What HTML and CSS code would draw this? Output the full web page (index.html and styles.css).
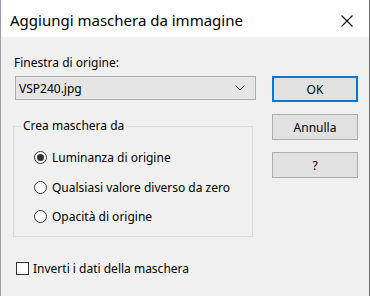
FILE: index.html
```html
<!DOCTYPE html>
<html lang="it">
<head>
  <meta charset="UTF-8">
  <title>Aggiungi maschera da immagine</title>
  <link rel="stylesheet" href="styles.css">
</head>
<body>
  <div class="finestra">
    <!-- Barra del titolo -->
    <div class="titolo">
      <span class="titolo-testo">Aggiungi maschera da immagine</span>
      <span class="chiudi">
        <svg width="12" height="12" viewBox="0 0 12 12">
          <path d="M0.5 0.5 L11.5 11.5 M11.5 0.5 L0.5 11.5" stroke="#111" stroke-width="1.1" fill="none"/>
        </svg>
      </span>
    </div>

    <div class="contenuto">
      <!-- Colonna sinistra -->
      <div class="colonna">
        <div class="etichetta">Finestra di origine:</div>
        <div class="tendina">
          <span>VSP240.jpg</span>
          <svg width="10" height="6" viewBox="0 0 10 6">
            <path d="M0.5 0.5 L5 5 L9.5 0.5" stroke="#444" stroke-width="1" fill="none"/>
          </svg>
        </div>

        <fieldset class="gruppo">
          <legend>Crea maschera da</legend>
          <div class="opzione"><span class="radio attivo"></span>Luminanza di origine</div>
          <div class="opzione"><span class="radio"></span>Qualsiasi valore diverso da zero</div>
          <div class="opzione"><span class="radio"></span>Opacità di origine</div>
        </fieldset>

        <div class="spunta"><span class="casella"></span>Inverti i dati della maschera</div>
      </div>

      <!-- Colonna pulsanti -->
      <div class="pulsanti">
        <button class="pulsante predefinito">OK</button>
        <button class="pulsante">Annulla</button>
        <button class="pulsante">?</button>
      </div>
    </div>
  </div>
</body>
</html>
```

FILE: styles.css
```css
html, body {
  margin: 0;
  padding: 0;
}

body {
  font-family: 'Noto Sans', 'Open Sans', sans-serif;
  font-size: 12px;
  color: #000;
}

.finestra {
  width: 370px;
  height: 296px;
  box-sizing: border-box;
  background: #f0f0f0;
  border-left: 1px solid #a39aa8;
  border-right: 1px solid #6e6e6e;
  display: flex;
  flex-direction: column;
}

.titolo {
  height: 37px;
  background: #fff;
  display: flex;
  align-items: center;
  justify-content: space-between;
  padding: 0 16px 0 9px;
}

.titolo-testo {
  font-size: 15px;
  margin-top: 2px;
}

.chiudi {
  display: flex;
  margin-top: 5px;
}

.contenuto {
  display: flex;
  padding: 18px 0 0 12px;
}

.colonna {
  width: 243px;
  display: flex;
  flex-direction: column;
}

.etichetta {
  margin-left: 1px;
  line-height: 16px;
}

.tendina {
  margin: 5px 0 0 2px;
  height: 24px;
  box-sizing: border-box;
  border: 1px solid #adadad;
  background: #e5e5e5;
  display: flex;
  align-items: center;
  justify-content: space-between;
  padding: 0 10px 0 3px;
}

.gruppo {
  margin: 18px 3px 0 0;
  border: 1px solid #dcdcdc;
  padding: 9px 0 5px 6px;
  height: 119px;
  box-sizing: border-box;
}

.gruppo legend {
  padding: 0 3px;
  line-height: 16px;
}

.opzione {
  display: flex;
  align-items: center;
  height: 29.5px;
  margin-left: 14px;
}

.radio {
  width: 13px;
  height: 13px;
  box-sizing: border-box;
  border: 1px solid #333;
  border-radius: 50%;
  background: #fff;
  margin-right: 5px;
  display: flex;
  align-items: center;
  justify-content: center;
}

.radio.attivo::after {
  content: "";
  width: 7px;
  height: 7px;
  border-radius: 50%;
  background: #333;
}

.spunta {
  display: flex;
  align-items: center;
  margin: 23px 0 0 3px;
}

.casella {
  width: 13px;
  height: 13px;
  box-sizing: border-box;
  border: 1px solid #333;
  background: #fff;
  margin-right: 4px;
}

.pulsanti {
  display: flex;
  flex-direction: column;
  margin: 21px 0 0 16px;
  gap: 12px;
}

.pulsante {
  width: 86px;
  height: 26px;
  box-sizing: border-box;
  border: 1px solid #adadad;
  background: #e1e1e1;
  font-family: inherit;
  font-size: 12px;
  color: #000;
  padding: 0;
}

.pulsante.predefinito {
  border: 2px solid #0078d7;
}
```
